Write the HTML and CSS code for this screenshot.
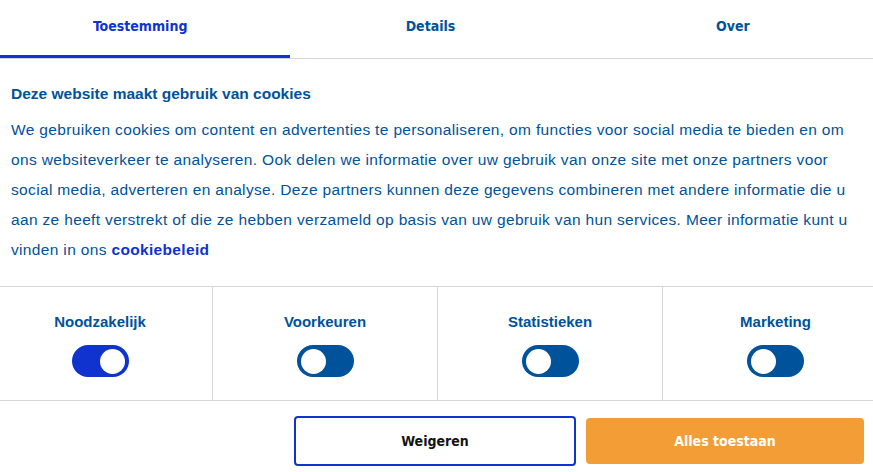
FILE: index.html
```html
<!DOCTYPE html>
<html lang="nl">
<head>
<meta charset="utf-8">
<link rel="stylesheet" href="styles.css">
</head>
<body>
<div class="dialog">
  <nav class="tabs">
    <div class="tab first active">Toestemming</div>
    <div class="tab">Details</div>
    <div class="tab last">Over</div>
  </nav>
  <section class="content">
    <h2 class="title">Deze website maakt gebruik van cookies</h2>
    <p class="text">We gebruiken cookies om content en advertenties te personaliseren, om functies voor social media te bieden en om ons websiteverkeer te analyseren. Ook delen we informatie over uw gebruik van onze site met onze partners voor social media, adverteren en analyse. Deze partners kunnen deze gegevens combineren met andere informatie die u aan ze heeft verstrekt of die ze hebben verzameld op basis van uw gebruik van hun services. Meer informatie kunt u vinden in ons <a class="link">cookiebeleid</a></p>
  </section>
  <div class="toggles">
    <div class="cell">
      <span class="label">Noodzakelijk</span>
      <span class="switch on"><span class="knob"></span></span>
    </div>
    <div class="cell">
      <span class="label">Voorkeuren</span>
      <span class="switch"><span class="knob"></span></span>
    </div>
    <div class="cell">
      <span class="label">Statistieken</span>
      <span class="switch"><span class="knob"></span></span>
    </div>
    <div class="cell">
      <span class="label">Marketing</span>
      <span class="switch"><span class="knob"></span></span>
    </div>
  </div>
  <div class="actions">
    <button class="btn deny">Weigeren</button>
    <button class="btn allow">Alles toestaan</button>
  </div>
</div>
</body>
</html>
```
FILE: styles.css
```css
* { box-sizing: border-box; }
html, body { margin: 0; padding: 0; background: #fff; }
body { overflow: hidden; width: 873px; height: 472px; }
.dialog { width: 873px; font-family: "Liberation Sans", Arial, sans-serif; color: #00529b; }

.tabs { display: flex; height: 59px; border-bottom: 1px solid #d6d6d6; }
.tab { flex: 1; text-align: center; padding-top: 18px; font-family: "DejaVu Sans Condensed", "DejaVu Sans", sans-serif; font-weight: bold; font-size: 14px; color: #00529b; }
.tab.first { padding-right: 10px; }
.tab.last { padding-left: 22px; }
.tab.active { color: #1032cf; border-bottom: 3px solid #1032cf; }

.content { padding: 26px 11px 21px 11px; border-bottom: 1px solid #d6d6d6; }
.title { margin: 0 0 12px 0; font-size: 15.5px; font-weight: bold; line-height: 18px; }
.text { margin: 0; font-size: 15.5px; line-height: 30px; letter-spacing: 0.34px; }
.link { font-weight: bold; color: #1032cf; }

.toggles { display: grid; grid-template-columns: repeat(4, 225px); margin-left: -12px; width: 900px; border-bottom: 1px solid #d6d6d6; }
.cell { display: flex; flex-direction: column; align-items: center; height: 113px; padding-top: 26px; border-right: 1px solid #d6d6d6; }
.cell:last-child { border-right: none; }
.label { font-size: 15px; font-weight: bold; line-height: 18px; }
.switch { margin-top: 14px; width: 57px; height: 32px; border-radius: 16px; background: #00529b; display: flex; align-items: center; padding: 0 4px; }
.switch.on { background: #1032cf; justify-content: flex-end; }
.knob { width: 25px; height: 25px; border-radius: 50%; background: #fff; }

.actions { display: flex; justify-content: flex-end; gap: 10px; padding: 15px 9px 0 0; }
.btn { width: 280px; height: 50px; border-radius: 4px; font-family: "DejaVu Sans Condensed", "DejaVu Sans", sans-serif; font-weight: bold; font-size: 14px; cursor: pointer; }
.btn.deny { width: 282px; background: #fff; color: #141414; border: 2px solid #1032cf; }
.btn.allow { width: 278px; height: 46px; margin-top: 2px; background: #f29d36; color: #fff; border: none; }
```
